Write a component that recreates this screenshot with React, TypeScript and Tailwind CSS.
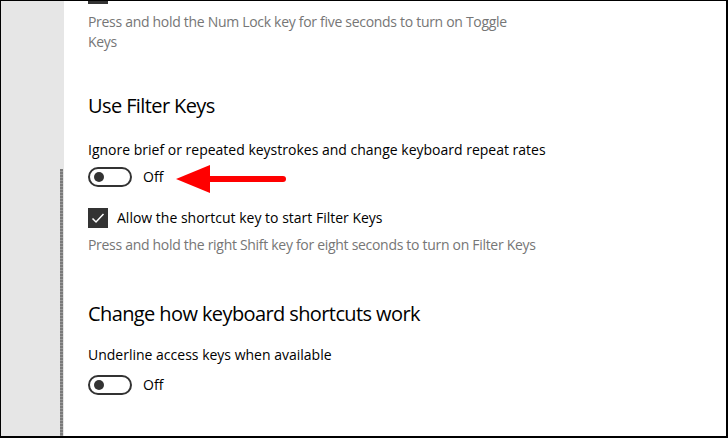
import React from "react";

const font = { fontFamily: '"Segoe UI", "Open Sans", "Noto Sans", sans-serif' };

function Toggle() {
  return (
    <div className="flex items-center gap-[11px]">
      <div className="flex h-[20px] w-[44px] items-center rounded-full border-2 border-[#333333] pl-[4px]">
        <div className="h-[10px] w-[10px] rounded-full bg-[#333333]" />
      </div>
      <span className="text-[14px] leading-[20px] text-black">Off</span>
    </div>
  );
}

export default function App() {
  return (
    <div
      className="flex h-[438px] w-[728px] overflow-hidden border-t border-l border-r-2 border-b-2 border-black bg-white"
      style={font}
    >
      {/* side nav strip with scrollbar */}
      <div className="flex w-[63px] shrink-0 justify-end bg-[#e6e6e6] pr-[1px]">
        <div className="mt-[168px] w-[3px] bg-[repeating-linear-gradient(180deg,#7a7a7a_0px,#7a7a7a_2px,#9a9a9a_2px,#9a9a9a_3px)]" />
      </div>

      <div className="relative flex-1 pl-[24px]">
        {/* bottom of the previous checkbox, scrolled off */}
        <div className="h-[3px] w-[20px] bg-[#333333]" />

        <p className="mt-[8px] w-[430px] text-[14px] leading-[20px] tracking-[-0.3px] text-[#767676]">
          Press and hold the Num Lock key for five seconds to turn on Toggle Keys
        </p>

        <h2 className="mt-[40px] text-[20px] leading-[28px] tracking-[-0.6px] text-black">
          Use Filter Keys
        </h2>
        <p className="mt-[20px] text-[14px] leading-[20px] text-black">
          Ignore brief or repeated keystrokes and change keyboard repeat rates
        </p>
        <div className="mt-[7px]">
          <Toggle />
        </div>

        <div className="mt-[21px] flex items-center gap-[9px]">
          <div className="flex h-[20px] w-[20px] items-center justify-center bg-[#333333]">
            <svg width="14" height="14" viewBox="0 0 14 14" fill="none">
              <path d="M1.5 7.5 L5 11 L12.5 3" stroke="white" strokeWidth="1.5" />
            </svg>
          </div>
          <span className="text-[14px] leading-[20px] text-black">
            Allow the shortcut key to start Filter Keys
          </span>
        </div>
        <p className="mt-[7px] text-[14px] leading-[20px] tracking-[-0.3px] text-[#767676]">
          Press and hold the right Shift key for eight seconds to turn on Filter Keys
        </p>

        <h2 className="mt-[45px] text-[20px] leading-[28px] tracking-[-0.6px] text-black">
          Change how keyboard shortcuts work
        </h2>
        <p className="mt-[17px] text-[14px] leading-[20px] text-black">
          Underline access keys when available
        </p>
        <div className="mt-[10px]">
          <Toggle />
        </div>

        {/* red annotation arrow */}
        <svg
          className="absolute left-[112px] top-[163px]"
          width="112"
          height="30"
          viewBox="0 0 112 30"
        >
          <path d="M30 15 H107" stroke="#ff0000" strokeWidth="6" strokeLinecap="round" />
          <path d="M0 15 L34 1 L34 29 Z" fill="#ff0000" />
        </svg>
      </div>
    </div>
  );
}
